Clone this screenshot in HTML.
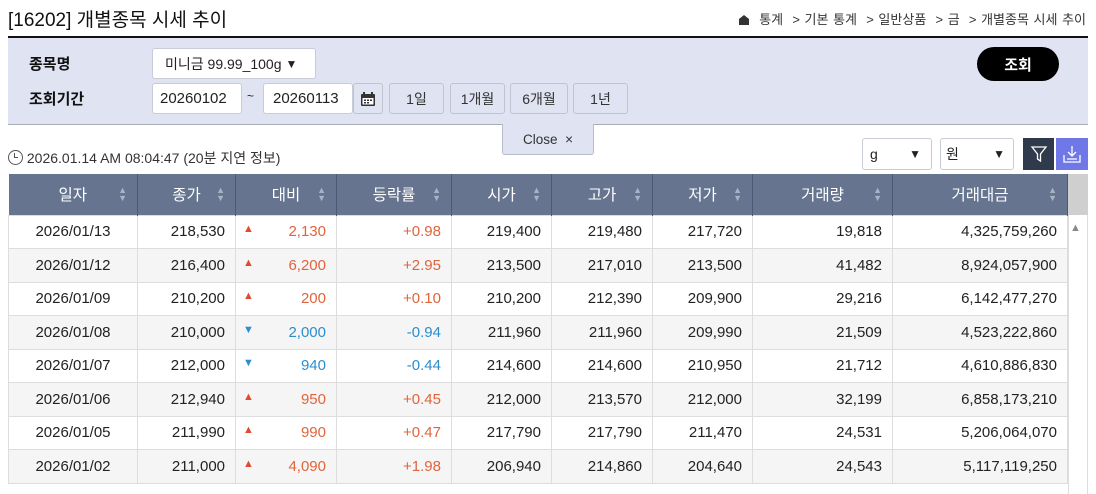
<!DOCTYPE html><html><head><meta charset="utf-8"><style>
*{box-sizing:border-box;margin:0;padding:0}
body{width:1096px;height:494px;overflow:hidden;background:#fff;font-family:"Liberation Sans","Noto Sans CJK KR",sans-serif;color:#222;position:relative}
.a{position:absolute}
.title{left:8px;top:5px;font-size:19px;color:#111}
.bc{right:10px;top:9px;font-size:13px;color:#333;word-spacing:1px}
.line{left:8px;top:36px;width:1080px;height:2px;background:#111}
.panel{left:8px;top:38px;width:1080px;height:87px;background:#dfe3f2;border-bottom:1px solid #a9adb8}
.lbl{font-size:15px;font-weight:bold;color:#111}
.box{background:#fff;border:1px solid #c8ccd6;border-radius:3px;font-size:14px;color:#222;display:flex;align-items:center}
.btn{background:#dfe3f2;border:1px solid #c0c4cf;border-radius:3px;font-size:14px;color:#333;display:flex;align-items:center;justify-content:center;height:31px;top:83px}
table{border-collapse:collapse;position:absolute;left:8px;top:174px;width:1060px;font-size:15px}
th{background:#66748f;color:#fff;font-weight:normal;height:41px;border-right:1px solid #4e5a72;position:relative;font-size:15.5px}
th i{position:absolute;right:10px;top:12px;font-style:normal;font-size:9px;color:#aab3c6;line-height:8px}
td{height:33.5px;border:1px solid #ddd;text-align:right;padding-right:10px}
tr:nth-child(odd) td{background:#f5f5f5}
td:first-child{text-align:center;padding:0}
.u{color:#e0643c}.d{color:#2b8ed0}
.tri{float:left;margin-left:7px;font-size:11px}
.u .tri{color:#e04a30}
</style></head><body>
<div class="a title">[16202] 개별종목 시세 추이</div>
<div class="a bc"><svg width="12" height="11" viewBox="0 0 12 11" style="vertical-align:-1px"><path d="M1 5L6 1L11 5V11H1Z" fill="#333"/></svg>&nbsp; 통계 &nbsp;&gt; 기본 통계 &nbsp;&gt; 일반상품 &nbsp;&gt; 금 &nbsp;&gt; 개별종목 시세 추이</div>
<div class="a line"></div>
<div class="a panel"></div>
<div class="a lbl" style="left:29px;top:53px">종목명</div>
<div class="a lbl" style="left:29px;top:88px">조회기간</div>
<div class="a box" style="left:152px;top:48px;width:164px;height:31px;padding-left:12px">미니금 99.99_100g <span style="font-size:12px;margin-left:4px">&#9660;</span></div>
<div class="a box" style="left:152px;top:83px;width:90px;height:31px;padding-left:7px;font-size:15px">20260102</div>
<div class="a" style="left:247px;top:89px;font-size:12px">~</div>
<div class="a box" style="left:263px;top:83px;width:90px;height:31px;padding-left:9px;font-size:15px">20260113</div>
<div class="a btn" style="left:353px;width:30px"><svg width="16" height="16" viewBox="0 0 16 16"><rect x="1" y="3" width="14" height="12" rx="1" fill="#333"/><rect x="3" y="1" width="2" height="4" fill="#333"/><rect x="11" y="1" width="2" height="4" fill="#333"/><rect x="2.5" y="7" width="11" height="6.5" fill="#fff"/><g fill="#333"><rect x="4" y="8.5" width="2" height="1.5"/><rect x="7" y="8.5" width="2" height="1.5"/><rect x="10" y="8.5" width="2" height="1.5"/><rect x="4" y="11" width="2" height="1.5"/><rect x="7" y="11" width="2" height="1.5"/></g></svg></div>
<div class="a btn" style="left:389px;width:55px">1일</div>
<div class="a btn" style="left:450px;width:55px">1개월</div>
<div class="a btn" style="left:510px;width:58px">6개월</div>
<div class="a btn" style="left:573px;width:55px">1년</div>
<div class="a" style="left:977px;top:47px;width:82px;height:34px;background:#000;border-radius:17px;color:#fff;font-weight:bold;font-size:15px;display:flex;align-items:center;justify-content:center">조회</div>
<div class="a" style="left:502px;top:124px;width:92px;height:31px;background:#dfe3f2;border:1px solid #b8bcc8;border-top:none;border-radius:0 0 3px 3px;font-size:13.5px;color:#333;display:flex;align-items:center;justify-content:center">Close &nbsp;×</div>
<div class="a" style="left:8px;top:148px;font-size:14px;color:#333"><span style="display:inline-block;width:15px;height:15px;border:1.5px solid #555;border-radius:50%;vertical-align:-2px;position:relative"><span style="position:absolute;left:5px;top:2px;width:4px;height:5px;border-left:1.5px solid #555;border-bottom:1.5px solid #555"></span></span> 2026.01.14 AM 08:04:47 (20분 지연 정보)</div>
<div class="a box" style="left:862px;top:138px;width:70px;height:32px;padding-left:7px;justify-content:space-between;padding-right:10px">g<span style="font-size:12px">&#9660;</span></div>
<div class="a box" style="left:940px;top:138px;width:74px;height:32px;padding-left:5px;justify-content:space-between;padding-right:8px">원<span style="font-size:12px">&#9660;</span></div>
<div class="a" style="left:1023px;top:138px;width:31px;height:32px;background:#2f3a4c;display:flex;align-items:center;justify-content:center"><svg width="18" height="18" viewBox="0 0 18 18"><path d="M2 2H16L10.5 9V16L7.5 14V9Z" fill="none" stroke="#fff" stroke-width="1.3"/></svg></div>
<div class="a" style="left:1056px;top:138px;width:32px;height:32px;background:#6f78e6;display:flex;align-items:center;justify-content:center"><svg width="20" height="20" viewBox="0 0 20 20"><path d="M10 2V12M6 8L10 12L14 8M2 11V18H18V11M5 15H15" fill="none" stroke="#fff" stroke-width="1.3"/></svg></div>
<div class="a" style="left:1068px;top:174px;width:20px;height:41px;background:#cfcfcf"></div>
<div class="a" style="left:1068px;top:215px;width:20px;height:279px;background:#fff;border-left:1px solid #ddd;border-right:1px solid #ddd"></div>
<div class="a" style="left:1070px;top:222px;font-size:11px;color:#888">&#9650;</div>
<table>
<tr><th style="width:129px">일자<i>▲<br>▼</i></th><th style="width:98px">종가<i>▲<br>▼</i></th><th style="width:101px">대비<i>▲<br>▼</i></th><th style="width:115px">등락률<i>▲<br>▼</i></th><th style="width:100px">시가<i>▲<br>▼</i></th><th style="width:101px">고가<i>▲<br>▼</i></th><th style="width:100px">저가<i>▲<br>▼</i></th><th style="width:140px">거래량<i>▲<br>▼</i></th><th>거래대금<i>▲<br>▼</i></th></tr>
<tr><td>2026/01/13</td><td>218,530</td><td class="u"><span class="tri">▲</span>2,130</td><td class="u">+0.98</td><td>219,400</td><td>219,480</td><td>217,720</td><td>19,818</td><td>4,325,759,260</td></tr>
<tr><td>2026/01/12</td><td>216,400</td><td class="u"><span class="tri">▲</span>6,200</td><td class="u">+2.95</td><td>213,500</td><td>217,010</td><td>213,500</td><td>41,482</td><td>8,924,057,900</td></tr>
<tr><td>2026/01/09</td><td>210,200</td><td class="u"><span class="tri">▲</span>200</td><td class="u">+0.10</td><td>210,200</td><td>212,390</td><td>209,900</td><td>29,216</td><td>6,142,477,270</td></tr>
<tr><td>2026/01/08</td><td>210,000</td><td class="d"><span class="tri">▼</span>2,000</td><td class="d">-0.94</td><td>211,960</td><td>211,960</td><td>209,990</td><td>21,509</td><td>4,523,222,860</td></tr>
<tr><td>2026/01/07</td><td>212,000</td><td class="d"><span class="tri">▼</span>940</td><td class="d">-0.44</td><td>214,600</td><td>214,600</td><td>210,950</td><td>21,712</td><td>4,610,886,830</td></tr>
<tr><td>2026/01/06</td><td>212,940</td><td class="u"><span class="tri">▲</span>950</td><td class="u">+0.45</td><td>212,000</td><td>213,570</td><td>212,000</td><td>32,199</td><td>6,858,173,210</td></tr>
<tr><td>2026/01/05</td><td>211,990</td><td class="u"><span class="tri">▲</span>990</td><td class="u">+0.47</td><td>217,790</td><td>217,790</td><td>211,470</td><td>24,531</td><td>5,206,064,070</td></tr>
<tr><td>2026/01/02</td><td>211,000</td><td class="u"><span class="tri">▲</span>4,090</td><td class="u">+1.98</td><td>206,940</td><td>214,860</td><td>204,640</td><td>24,543</td><td>5,117,119,250</td></tr>
</table>
</body></html>
